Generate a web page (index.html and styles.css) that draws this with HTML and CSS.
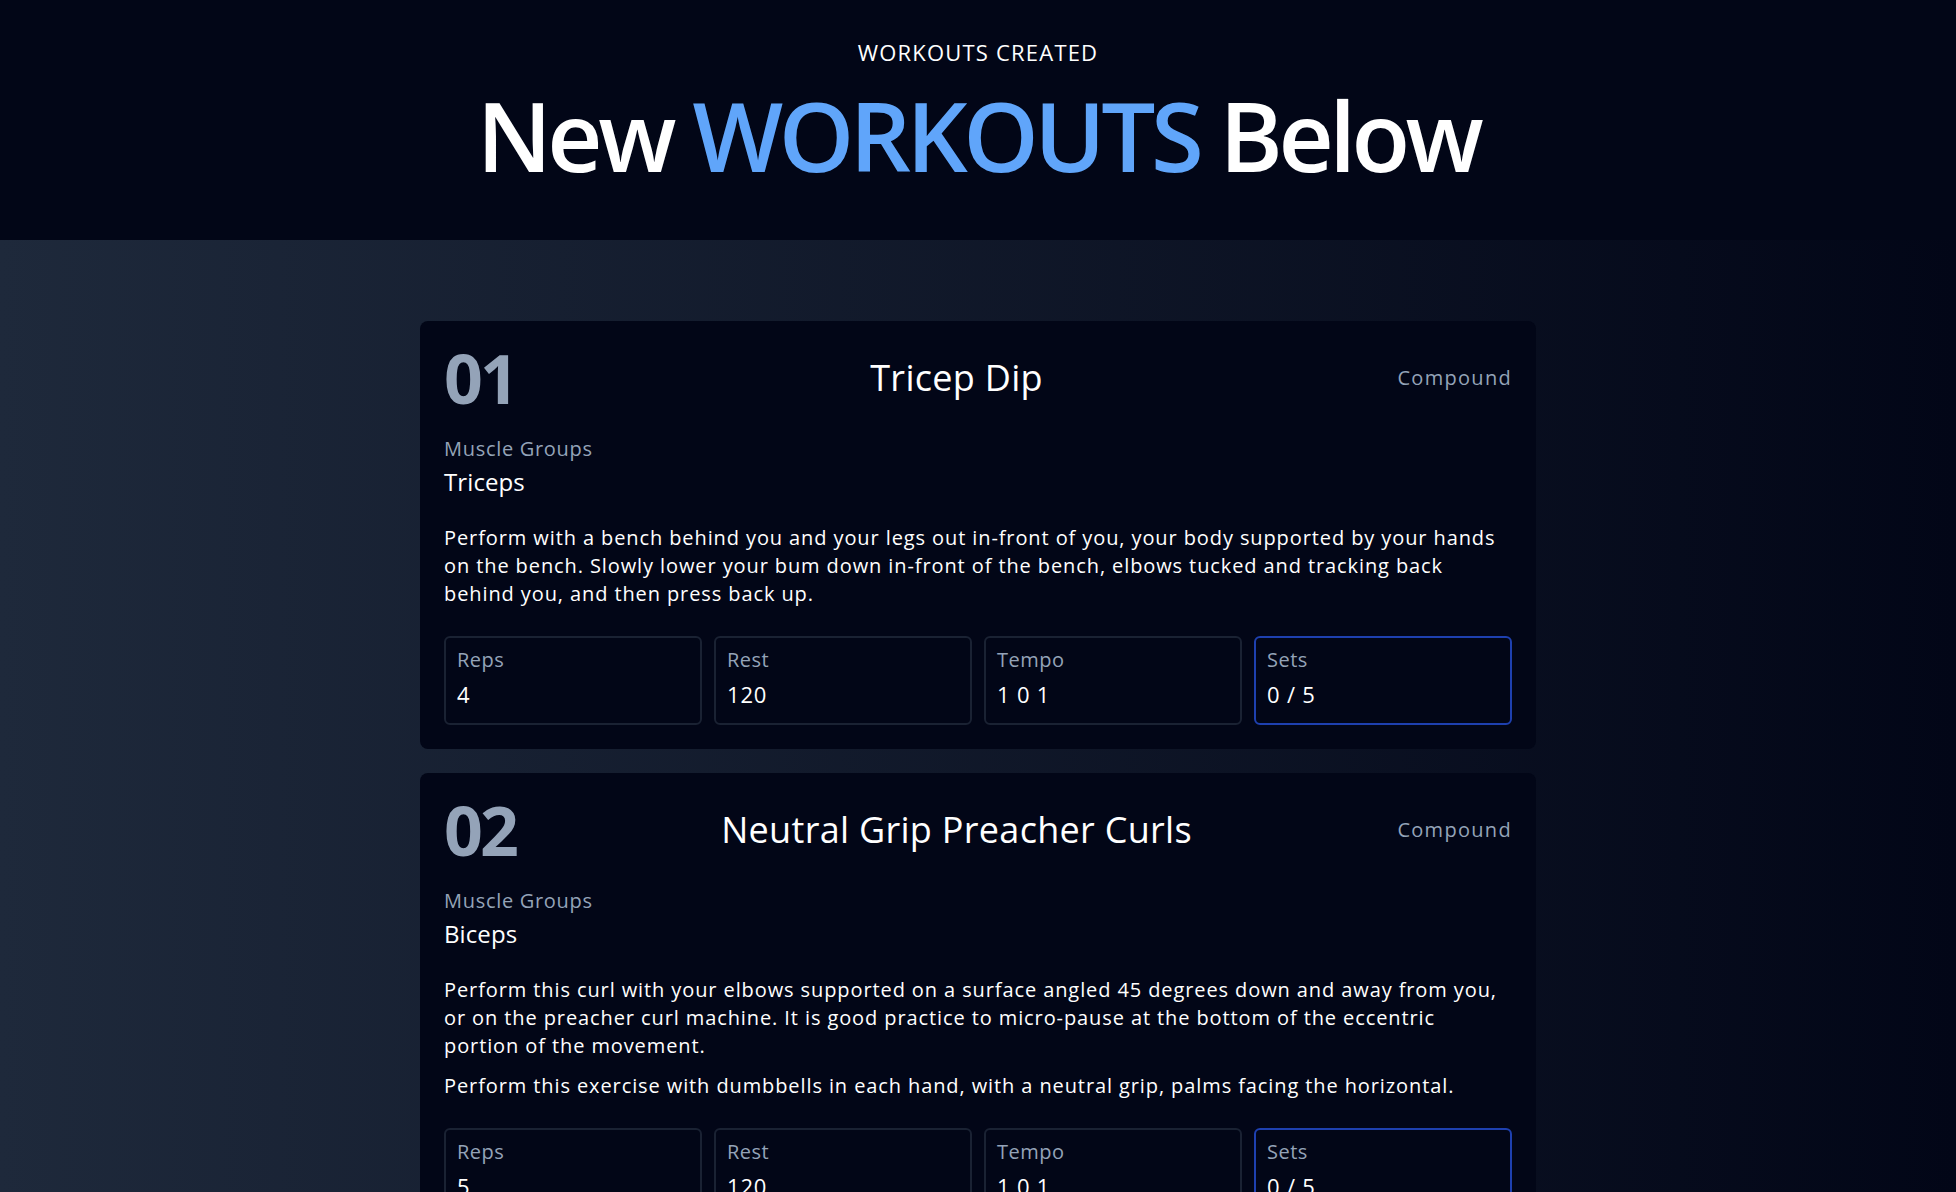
FILE: index.html
```html
<!DOCTYPE html>
<html lang="en">
<head>
<meta charset="utf-8">
<title>Workouts</title>
<link rel="stylesheet" href="styles.css">
</head>
<body>
<header class="hero">
  <p class="hero-kicker">WORKOUTS CREATED</p>
  <h1 class="hero-title">New <span class="accent">WORKOUTS</span> Below</h1>
</header>
<main class="list">
  <section class="card">
    <div class="card-head">
      <span class="card-num">01</span>
      <h2 class="card-title">Tricep Dip</h2>
      <span class="card-type">Compound</span>
    </div>
    <p class="muted-label">Muscle Groups</p>
    <p class="muscles">Triceps</p>
    <div class="desc">
      <p>Perform with a bench behind you and your legs out in-front of you, your body supported by your hands on the bench. Slowly lower your bum down in-front of the bench, elbows tucked and tracking back behind you, and then press back up.</p>
    </div>
    <div class="stats">
      <div class="stat"><span class="stat-label">Reps</span><span class="stat-value">4</span></div>
      <div class="stat"><span class="stat-label">Rest</span><span class="stat-value">120</span></div>
      <div class="stat"><span class="stat-label">Tempo</span><span class="stat-value">1 0 1</span></div>
      <div class="stat stat-sets"><span class="stat-label">Sets</span><span class="stat-value">0 / 5</span></div>
    </div>
  </section>
  <section class="card">
    <div class="card-head">
      <span class="card-num">02</span>
      <h2 class="card-title">Neutral Grip Preacher Curls</h2>
      <span class="card-type">Compound</span>
    </div>
    <p class="muted-label">Muscle Groups</p>
    <p class="muscles">Biceps</p>
    <div class="desc">
      <p>Perform this curl with your elbows supported on a surface angled 45 degrees down and away from you, or on the preacher curl machine. It is good practice to micro-pause at the bottom of the eccentric portion of the movement.</p>
      <p>Perform this exercise with dumbbells in each hand, with a neutral grip, palms facing the horizontal.</p>
    </div>
    <div class="stats">
      <div class="stat"><span class="stat-label">Reps</span><span class="stat-value">5</span></div>
      <div class="stat"><span class="stat-label">Rest</span><span class="stat-value">120</span></div>
      <div class="stat"><span class="stat-label">Tempo</span><span class="stat-value">1 0 1</span></div>
      <div class="stat stat-sets"><span class="stat-label">Sets</span><span class="stat-value">0 / 5</span></div>
    </div>
  </section>
</main>
</body>
</html>
```
FILE: styles.css
```css
* { box-sizing: border-box; }
html, body { margin: 0; padding: 0; }
body {
  font-family: "Open Sans", "Liberation Sans", sans-serif;
  color: #ffffff;
  background: linear-gradient(to right, #1e293b, #020617);
  min-height: 100vh;
}
p, h1, h2 { margin: 0; }

.hero {
  height: 240px;
  background: #020617;
  display: flex;
  flex-direction: column;
  align-items: center;
  padding-top: 37px;
}
.hero-kicker {
  font-size: 22px;
  line-height: 30px;
  font-weight: 500;
  letter-spacing: 1.2px;
}
.hero-title {
  margin-top: 20px;
  font-size: 96px;
  line-height: 96px;
  font-weight: 600;
  letter-spacing: -4.5px;
}
.accent { color: #60a5fa; }

.list {
  width: 1116px;
  margin: 0 auto;
  padding: 81px 0 80px;
  display: flex;
  flex-direction: column;
  gap: 24px;
}
.card {
  background: #020617;
  border-radius: 8px;
  padding: 21px 24px 24px;
}
.card-head {
  display: flex;
  justify-content: space-between;
  align-items: center;
  height: 72px;
}
.card-num {
  font-size: 68px;
  line-height: 72px;
  font-weight: 700;
  letter-spacing: -3px;
  color: #94a3b8;
}
.card-title {
  font-size: 36px;
  line-height: 40px;
  font-weight: 400;
  letter-spacing: 0.3px;
}
.card-type {
  font-size: 20px;
  line-height: 28px;
  letter-spacing: 1.3px;
  color: #94a3b8;
}
.muted-label {
  margin-top: 21px;
  font-size: 20px;
  line-height: 28px;
  letter-spacing: 0.7px;
  color: #94a3b8;
}
.muscles {
  margin-top: 3px;
  font-size: 24px;
  line-height: 32px;
  letter-spacing: 0.1px;
}
.desc {
  margin-top: 26px;
  display: flex;
  flex-direction: column;
  gap: 12px;
  font-size: 20px;
  line-height: 28px;
  letter-spacing: 0.9px;
}
.stats {
  margin-top: 28px;
  display: grid;
  grid-template-columns: repeat(4, 1fr);
  gap: 12px;
}
.stat {
  border: 2px solid #1a2233;
  border-radius: 6px;
  padding: 10px 11px 11px;
  display: flex;
  flex-direction: column;
}
.stat-sets { border-color: #1e40af; }
.stat-label {
  font-size: 20px;
  line-height: 24px;
  letter-spacing: 0.5px;
  color: #94a3b8;
}
.stat-value {
  margin-top: 4px;
  font-size: 22px;
  line-height: 36px;
  font-weight: 500;
  letter-spacing: 0.8px;
}
```
